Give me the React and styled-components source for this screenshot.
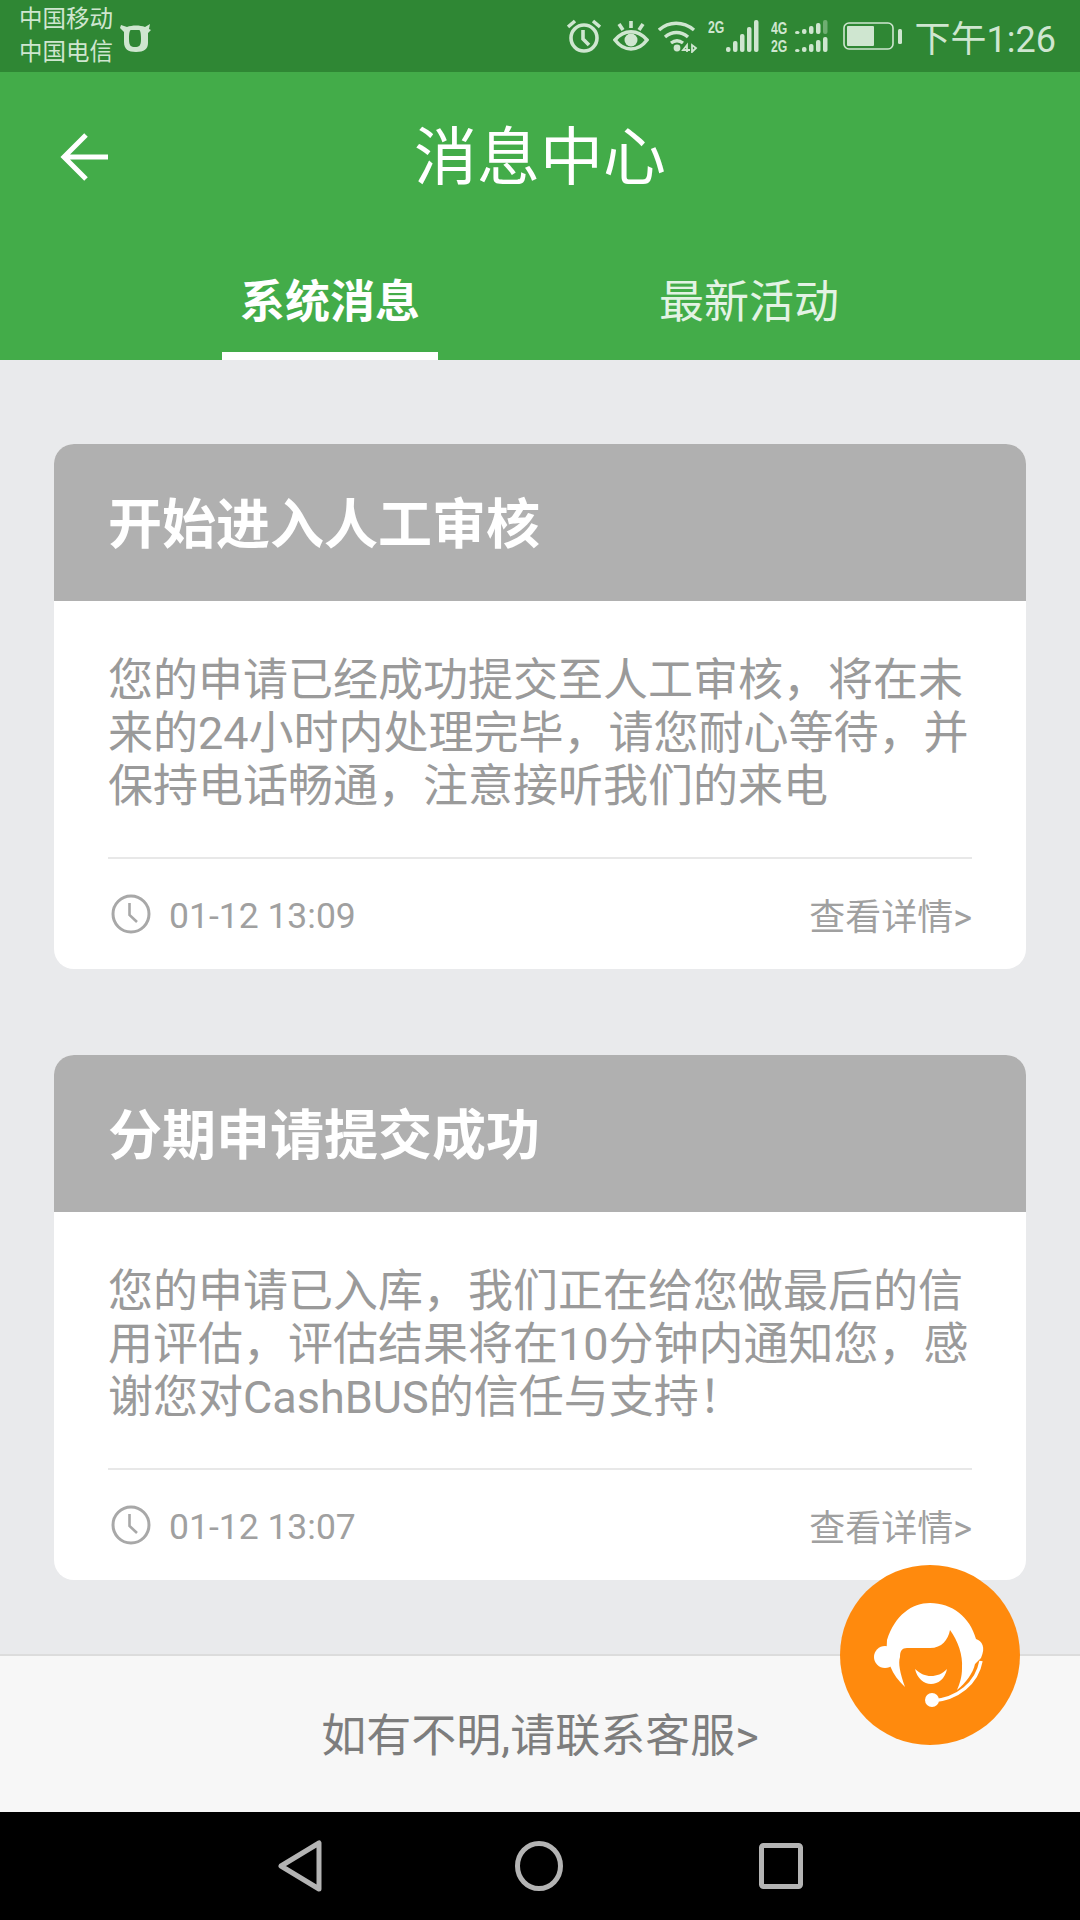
import React from 'react'
import styled, { createGlobalStyle } from 'styled-components'

const GlobalStyle = createGlobalStyle`
  html, body { margin: 0; padding: 0; background: #e9eaec; }
  * { box-sizing: border-box; }
`;
const Page = styled.div`
  width: 1080px;
  height: 1920px;
  position: relative;
  display: flex;
  flex-direction: column;
  overflow: hidden;
  font-family: Roboto, "Noto Sans CJK SC", sans-serif;
  background: #e9eaec;
`;
const StatusBar = styled.div`
  height: 72px;
  flex: none;
  background: #2f8734;
  color: #cfe6d0;
  display: flex;
  align-items: center;
  justify-content: space-between;
  padding: 0 24px 0 19px;
`;
const StatusLeft = styled.div`
  display: flex;
  align-items: center;
  gap: 6px;
`;
const Carriers = styled.div`
  font-size: 23.5px;
  line-height: 33px;
  width: 94px;
  white-space: nowrap;
`;
const StatusRight = styled.div`
  display: flex;
  align-items: center;
`;
const StatusIcon = styled.svg`
  display: block;
  margin-left: ${(p) => p.$gap || 0}px;
  flex: none;
`;
const StatusTime = styled.span`
  font-size: 36px;
  margin-left: 12px;
  white-space: nowrap;
`;
const Header = styled.header`
  height: 288px;
  flex: none;
  background: #43ac49;
  color: #fff;
  display: flex;
  flex-direction: column;
`;
const TitleRow = styled.div`
  height: 170px;
  position: relative;
  display: flex;
  align-items: center;
  justify-content: center;
  font-size: 63px;
  padding-bottom: 11px;
`;
const BackIcon = styled.svg`
  position: absolute;
  left: 60px;
  top: 60px;
`;
const Tabs = styled.div`
  flex: 1;
  display: flex;
  justify-content: center;
  gap: 203px;
  padding-right: 1px;
`;
const Tab = styled.div`
  width: 216px;
  font-size: 45px;
  font-weight: ${(p) => (p.$active ? 700 : 400)};
  color: ${(p) => (p.$active ? '#fff' : '#e3f3e4')};
  text-align: center;
  white-space: nowrap;
  padding-top: 24px;
  border-bottom: 8px solid ${(p) => (p.$active ? '#fff' : 'transparent')};
`;
const Content = styled.main`
  flex: 1;
  display: flex;
  flex-direction: column;
  gap: 86px;
  padding: 84px 54px 0;
`;
const Card = styled.article`
  height: 525px;
  background: #fff;
  border-radius: 20px;
  overflow: hidden;
  display: flex;
  flex-direction: column;
`;
const CardTitle = styled.h2`
  height: 157px;
  margin: 0;
  flex: none;
  background: #b0b0b0;
  color: #fff;
  font-size: 54px;
  font-weight: 700;
  display: flex;
  align-items: center;
  padding: 0 0 4px 54px;
`;
const CardBody = styled.p`
  margin: 0 54px;
  height: 258px;
  flex: none;
  padding-top: 53px;
  font-size: 45px;
  line-height: 53px;
  color: #9a9a9a;
  white-space: nowrap;
  border-bottom: 2px solid #e8e8e8;
`;
const Line = styled.span`
  display: block;
`;
const CardFoot = styled.div`
  flex: 1;
  display: flex;
  align-items: center;
  justify-content: space-between;
  margin: 0 54px;
  color: #a0a0a0;
`;
const TimeInfo = styled.div`
  display: flex;
  align-items: center;
  gap: 18px;
  font-size: 35.5px;
  padding-left: 3px;
  line-height: 44px;
`;
const Stamp = styled.span`
  position: relative;
  top: 2px;
`;
const DetailLink = styled.a`
  font-size: 36px;
`;
const Footer = styled.footer`
  height: 158px;
  flex: none;
  background: #f7f7f7;
  border-top: 2px solid #dcdcdc;
  display: flex;
  align-items: center;
  justify-content: center;
  font-size: 45px;
  color: #7d7d7d;
  padding-bottom: 3px;
`;
const NavBar = styled.nav`
  height: 108px;
  flex: none;
  background: #000;
  display: flex;
  align-items: center;
  justify-content: center;
  gap: 193px;
`;
const HomeIcon = styled.svg`
  margin: 0 3px 0 -3px;
`;
const Fab = styled.div`
  position: absolute;
  left: 840px;
  top: 1565px;
  width: 180px;
  height: 180px;
  border-radius: 50%;
  background: #ff8a0d;
`;
const SmallLabel = styled.text`
  font-family: "Liberation Sans", sans-serif;
  font-size: 17px;
  font-weight: 700;
  fill: #cfe6d0;
`;

const messages = [
  {
    title: '开始进入人工审核',
    lines: ['您的申请已经成功提交至人工审核，将在未', '来的24小时内处理完毕，请您耐心等待，并', '保持电话畅通，注意接听我们的来电'],
    time: '01-12 13:09',
  },
  {
    title: '分期申请提交成功',
    lines: ['您的申请已入库，我们正在给您做最后的信', '用评估，评估结果将在10分钟内通知您，感', '谢您对CashBUS的信任与支持！'],
    time: '01-12 13:07',
  },
];

const Clock = () => (
  <svg width="40" height="40" viewBox="0 0 40 40" fill="none" stroke="#a8a8a8" strokeWidth="3">
    <circle cx="20" cy="20" r="18" />
    <path d="M18.5 9v12l7.5 7" strokeWidth="2.6" />
  </svg>
);

const Cow = () => (
  <svg width="34" height="34" viewBox="0 0 34 34" fill="#cfe6d0">
    <path fillRule="evenodd" d="M2 6l6 2c5-2 13-2 18 0l5-3-1 5 2 1-3 3v10c0 6-4 9-12 9S5 30 5 23V13L1 9zM12 11c-1 0-2 2-2 9s2 8 6 8 6-1 6-8-1-9-2-9z" />
  </svg>
);

const Alarm = () => (
  <StatusIcon width="34" height="36" viewBox="0 0 34 36" fill="none" stroke="#cfe6d0" strokeWidth="3.6">
    <circle cx="17" cy="20" r="13" />
    <path d="M16 12v9l6 6M1 9l7-6M33 9l-7-6" />
  </StatusIcon>
);

const Eye = () => (
  <StatusIcon $gap={12} width="36" height="34" viewBox="0 0 36 34" fill="none" stroke="#cfe6d0" strokeWidth="3.6">
    <path d="M2 21c9-11 23-11 32 0-9 12-23 12-32 0z" />
    <circle cx="18" cy="21" r="6.5" fill="#cfe6d0" stroke="none" />
    <path d="M18 2v7M6 5l4 6M30 5l-4 6" />
  </StatusIcon>
);

const Wifi = () => (
  <StatusIcon $gap={9} width="40" height="34" viewBox="0 0 40 34" fill="none" stroke="#cfe6d0" strokeWidth="3.4">
    <path d="M1 11c10-9 24-9 35 0M7 18c7-6 16-6 23 0M13 24c4-3 8-3 12 0" />
    <circle cx="19" cy="29" r="3.4" fill="#cfe6d0" stroke="none" />
    <path d="M29 33v-7l-4 5h7M34 26v7l4-4z" strokeWidth="1.8" />
  </StatusIcon>
);

const Bars = ({ x, y, heights, w = 4.5, step = 7, last }) =>
  heights.map((h, i) => (
    <rect key={i} x={x + i * step} y={y - h} width={w} height={h} rx="2" fill={last && i === heights.length - 1 ? '#6fae72' : '#cfe6d0'} />
  ));

const Signal2G = () => (
  <StatusIcon $gap={10} width="52" height="36" viewBox="0 0 52 36">
    <SmallLabel transform="translate(0 15) scale(0.72 1)">2G</SmallLabel>
    <Bars x={18} y={34} heights={[5, 11, 18, 25, 32]} />
  </StatusIcon>
);

const Signal4G = () => (
  <StatusIcon $gap={11} width="58" height="36" viewBox="0 0 58 36">
    <SmallLabel transform="translate(0 16) scale(0.72 1)">4G</SmallLabel>
    <SmallLabel transform="translate(0 34) scale(0.72 1)">2G</SmallLabel>
    <Bars x={24} y={16} heights={[3, 5, 8, 11, 14]} last />
    <Bars x={24} y={34} heights={[3, 5, 8, 12, 15]} />
  </StatusIcon>
);

const Battery = () => (
  <StatusIcon $gap={14} width="60" height="30" viewBox="0 0 60 30" fill="none">
    <rect x="1" y="2" width="49" height="26" rx="5" stroke="#cfe6d0" strokeWidth="1.6" />
    <rect x="4" y="5" width="27" height="20" rx="1" fill="#cfe6d0" />
    <rect x="55" y="8" width="4" height="15" rx="1.5" fill="#cfe6d0" />
  </StatusIcon>
);

const Agent = () => (
  <svg width="180" height="180" viewBox="0 0 180 180">
    <circle cx="45" cy="92" r="11" fill="#fff" />
    <path fill="#fff" d="M90 38C72 38 55 50 47 75C45 95 52 110 65 122C60 108 58 98 60 92C60 86 62 83 67 83L90 83C102 83 108 75 110 65C118 76 123 90 122 103C122 112 120 118 117 125C126 118 133 108 135 99L141 93C146 82 142 76 136 74C130 52 112 38 90 38Z" />
    <path fill="#fff" d="M75 104C81 109 85 111 91 111C97 111 102 109 107 104C105 114 98 119 91 119C84 119 77 113 75 104Z" />
    <path fill="none" stroke="#fff" strokeWidth="3.4" d="M141 96C137 118 118 134 92 136" />
    <circle cx="92" cy="135" r="7" fill="#fff" />
  </svg>
);

export default function App() {
  return (
    <Page>
      <GlobalStyle />
      <StatusBar>
        <StatusLeft>
          <Carriers>
            <Line>中国移动</Line>
            <Line>中国电信</Line>
          </Carriers>
          <Cow />
        </StatusLeft>
        <StatusRight>
          <Alarm />
          <Eye />
          <Wifi />
          <Signal2G />
          <Signal4G />
          <Battery />
          <StatusTime>下午1:26</StatusTime>
        </StatusRight>
      </StatusBar>
      <Header>
        <TitleRow>
          <BackIcon width="50" height="50" viewBox="0 0 50 50" fill="none" stroke="#fff" strokeWidth="5">
            <path d="M48 25H4M26 3L4 25l22 22" />
          </BackIcon>
          消息中心
        </TitleRow>
        <Tabs>
          <Tab $active>系统消息</Tab>
          <Tab>最新活动</Tab>
        </Tabs>
      </Header>
      <Content>
        {messages.map((m) => (
          <Card key={m.title}>
            <CardTitle>{m.title}</CardTitle>
            <CardBody>
              {m.lines.map((l) => (
                <Line key={l}>{l}</Line>
              ))}
            </CardBody>
            <CardFoot>
              <TimeInfo>
                <Clock />
                <Stamp>{m.time}</Stamp>
              </TimeInfo>
              <DetailLink>查看详情&gt;</DetailLink>
            </CardFoot>
          </Card>
        ))}
      </Content>
      <Footer>如有不明,请联系客服&gt;</Footer>
      <NavBar>
        <svg width="48" height="52" viewBox="0 0 48 52" fill="none" stroke="#b4b4b4" strokeWidth="5" strokeLinejoin="round">
          <path d="M42 3v46L4 26z" />
        </svg>
        <HomeIcon width="48" height="50" viewBox="0 0 48 50" fill="none" stroke="#b4b4b4" strokeWidth="5">
          <ellipse cx="24" cy="25" rx="21.5" ry="22.5" />
        </HomeIcon>
        <svg width="44" height="46" viewBox="0 0 44 46" fill="none" stroke="#b4b4b4" strokeWidth="5" strokeLinejoin="round">
          <rect x="2.5" y="2.5" width="39" height="41" rx="2" />
        </svg>
      </NavBar>
      <Fab>
        <Agent />
      </Fab>
    </Page>
  )
}
